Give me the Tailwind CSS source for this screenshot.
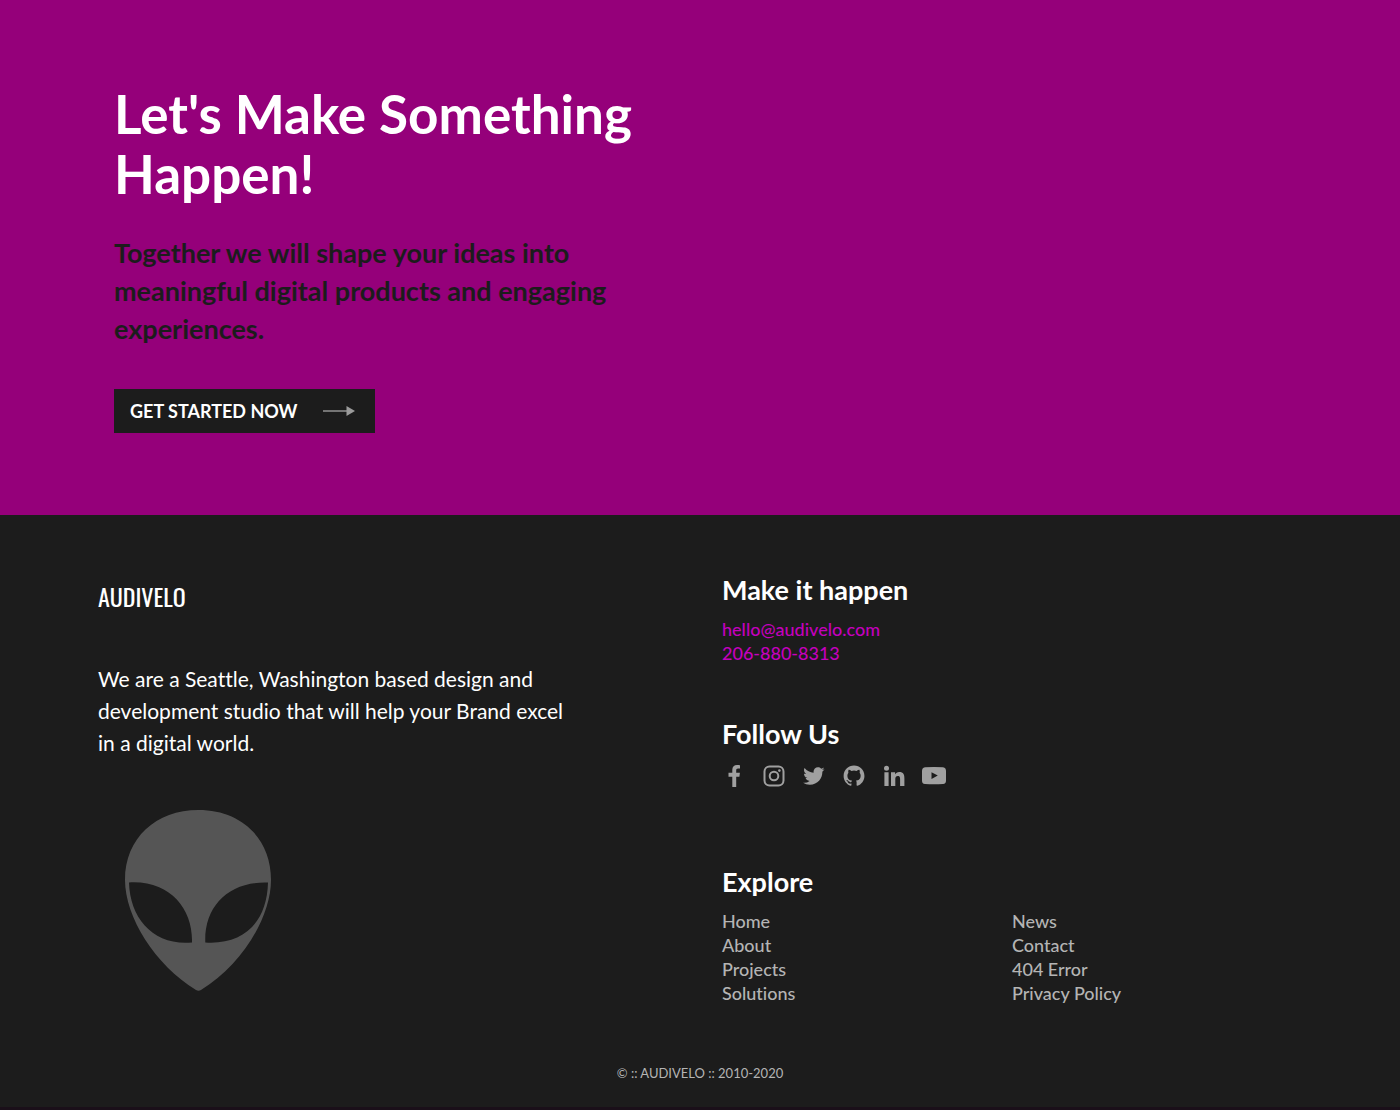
<!DOCTYPE html>
<html lang="en">

<head>
    <meta charset="UTF-8">
    <meta name="viewport" content="width=device-width, initial-scale=1.0">
    <title>Audivelo</title>
    <script src="https://cdn.jsdelivr.net/npm/@tailwindcss/browser@4"></script>
</head>

<body class="bg-[#1a0f19] font-['Lato','Open_Sans',sans-serif] text-white [font-variant-ligatures:none]">
    <!-- Call to action -->
    <section class="bg-[#95007a] px-[7%] pt-[84px] pb-[82px]">
        <div class="max-w-[580px] px-4">
            <h1 class="text-[53px] leading-[60px] font-bold">Let's Make Something Happen!</h1>
            <p class="mt-[30px] text-[27px] leading-[38px] font-bold text-[#1c1c1c]">Together we will shape your ideas into meaningful digital products and engaging experiences.</p>
            <button type="button" class="mt-[41px] flex h-11 items-center gap-[26px] bg-[#1c1c1c] pr-5 pl-4 text-lg font-bold">
                GET STARTED NOW
                <svg class="h-3 w-8" viewBox="0 0 32 12" fill="#9b9b9b">
                    <path d="M0 5.3h24V6.7H0z" />
                    <path d="M23.5 1 32 6l-8.500 5z" />
                </svg>
            </button>
        </div>
    </section>

    <!-- Footer -->
    <footer class="bg-[#1c1c1c] px-[7%] pt-[56px] pb-6">
        <div class="grid grid-cols-2 gap-11">
            <div>
                <a href="#" class="mt-2 block font-['Oswald','Liberation_Sans_Narrow','Open_Sans_Condensed',sans-serif] text-2xl leading-[34px]">AUDIVELO</a>
                <p class="mt-[50px] max-w-[480px] text-[21px] leading-8">We are a Seattle, Washington based design and development studio that will help your Brand excel in a digital world.</p>
                <svg class="mt-[51px] ml-[27px] h-[182px] w-[147px]" viewBox="0 0 147 182" fill="#555555">
                    <path fill-rule="evenodd" d="M73.500 0C116 0 146 28 146 70C146 107 117 155 76 180Q73.500 181.500 71 180C30 155 0 107 0 70C0 28 31 0 73.500 0ZM4 72.500C5 109 29 136 67 132.500C68 99 45 70 4 72.500ZM143 72.500C104 71 79 96 80.300 132.500C118 135 142 113 143 72.500Z" />
                </svg>
            </div>

            <div class="font-medium">
                <h2 class="text-[27px] leading-[38px] font-bold">Make it happen</h2>
                <p class="mt-2 text-lg leading-6 text-[#c400bd]">
                    <a href="mailto:hello@audivelo.com" class="block">hello@audivelo.com</a>
                    <a href="tel:2068808313" class="block">206-880-8313</a>
                </p>

                <h2 class="mt-[50px] text-[27px] leading-[38px] font-bold">Follow Us</h2>
                <div class="mt-[11px] flex gap-4 text-[#a0a0a0]">
                    <a href="#" aria-label="Facebook">
                        <svg class="size-6" viewBox="0 0 24 24" fill="currentColor">
                            <path d="M10.300 23V12.700H6.500V8.800h3.800V5.800C10.300 2.700 12.200 1 15 1c1.300 0 2.500.1 3 .2v3.400h-1.900c-1.600 0-1.900.8-1.900 1.900v2.300h3.700l-.5 3.900h-3.200V23z" />
                        </svg>
                    </a>
                    <a href="#" aria-label="Instagram">
                        <svg class="size-6" viewBox="0 0 24 24" fill="none" stroke="currentColor" stroke-width="2">
                            <rect x="2.500" y="2.500" width="19" height="19" rx="5" />
                            <circle cx="12" cy="12" r="4.300" />
                            <circle cx="17.400" cy="6.600" r="1.300" fill="currentColor" stroke="none" />
                        </svg>
                    </a>
                    <a href="#" aria-label="Twitter">
                        <svg class="size-6" viewBox="1 1 22 22" fill="currentColor">
                            <path d="M19.633 7.997c.013.175.013.349.013.523 0 5.325-4.053 11.461-11.460 11.461-2.282 0-4.402-.661-6.186-1.809.324.037.636.050.973.050a8.070 8.070 0 0 0 5.001-1.721 4.036 4.036 0 0 1-3.767-2.793c.249.037.499.062.761.062.361 0 .724-.050 1.061-.137a4.027 4.027 0 0 1-3.230-3.953v-.050c.537.299 1.160.486 1.820.511a4.022 4.022 0 0 1-1.796-3.354c0-.748.199-1.434.548-2.032a11.457 11.457 0 0 0 8.306 4.215c-.062-.3-.1-.611-.1-.923a4.026 4.026 0 0 1 4.028-4.028c1.160 0 2.207.486 2.943 1.272a7.957 7.957 0 0 0 2.556-.973 4.020 4.020 0 0 1-1.771 2.220 8.073 8.073 0 0 0 2.319-.624 8.645 8.645 0 0 1-2.019 2.083z" />
                        </svg>
                    </a>
                    <a href="#" aria-label="GitHub">
                        <svg class="size-6" viewBox="0.500 0.500 23 23" fill="currentColor">
                            <path d="M12.026 2c-5.509 0-9.974 4.465-9.974 9.974 0 4.406 2.857 8.145 6.821 9.465.499.090.679-.217.679-.481 0-.237-.008-.865-.011-1.696-2.775.602-3.361-1.338-3.361-1.338-.452-1.152-1.107-1.459-1.107-1.459-.905-.619.069-.605.069-.605 1.002.070 1.527 1.028 1.527 1.028.890 1.524 2.336 1.084 2.902.829.091-.645.351-1.085.635-1.334-2.214-.251-4.542-1.107-4.542-4.930 0-1.087.389-1.979 1.024-2.675-.101-.253-.446-1.268.099-2.640 0 0 .837-.269 2.742 1.021a9.582 9.582 0 0 1 2.496-.336 9.554 9.554 0 0 1 2.496.336c1.906-1.291 2.742-1.021 2.742-1.021.545 1.372.203 2.387.099 2.640.640.696 1.024 1.587 1.024 2.675 0 3.833-2.330 4.675-4.552 4.922.355.308.675.916.675 1.846 0 1.334-.012 2.410-.012 2.737 0 .267.178.577.687.479C19.146 20.115 22 16.379 22 11.974 22 6.465 17.535 2 12.026 2z" />
                        </svg>
                    </a>
                    <a href="#" aria-label="LinkedIn">
                        <svg class="size-6" viewBox="0 0 24 24" fill="currentColor">
                            <circle cx="4.500" cy="4.300" r="2.500" />
                            <path d="M2.400 8.300h4.200v13.700H2.400zM9 8.300h4.100v1.900h.1c.6-1.100 2-2.200 4-2.200 4.300 0 5.200 2.700 5.200 6.400V22h-4.300v-6.500c0-1.500 0-3.500-2.200-3.500s-2.600 1.600-2.600 3.400V22H9z" />
                        </svg>
                    </a>
                    <a href="#" aria-label="YouTube">
                        <svg class="size-6" viewBox="0 0 24 24" fill="currentColor">
                            <path fill-rule="evenodd" d="M3 3.200Q12 2.700 21 3.200C23.300 3.400 24 5 24 7v9.500c0 2-.8 3.400-3 3.600Q12 20.600 3 20.100C.8 19.900 0 18.500 0 16.500V7c0-2 .8-3.600 3-3.800zM9.500 8.300v6.700l6.300-3.400z" />
                        </svg>
                    </a>
                </div>

                <h2 class="mt-[75px] text-[27px] leading-[38px] font-bold">Explore</h2>
                <nav class="mt-2 grid grid-cols-2 text-lg leading-6 text-[#b4b4b4]">
                    <div>
                        <a href="#" class="block">Home</a>
                        <a href="#" class="block">About</a>
                        <a href="#" class="block">Projects</a>
                        <a href="#" class="block">Solutions</a>
                    </div>
                    <div>
                        <a href="#" class="block">News</a>
                        <a href="#" class="block">Contact</a>
                        <a href="#" class="block">404 Error</a>
                        <a href="#" class="block">Privacy Policy</a>
                    </div>
                </nav>
            </div>
        </div>
        <p class="mt-[58px] text-center text-[13px] leading-5 text-[#b4b4b4]">© :: AUDIVELO :: 2010-2020</p>
    </footer>
</body>

</html>
